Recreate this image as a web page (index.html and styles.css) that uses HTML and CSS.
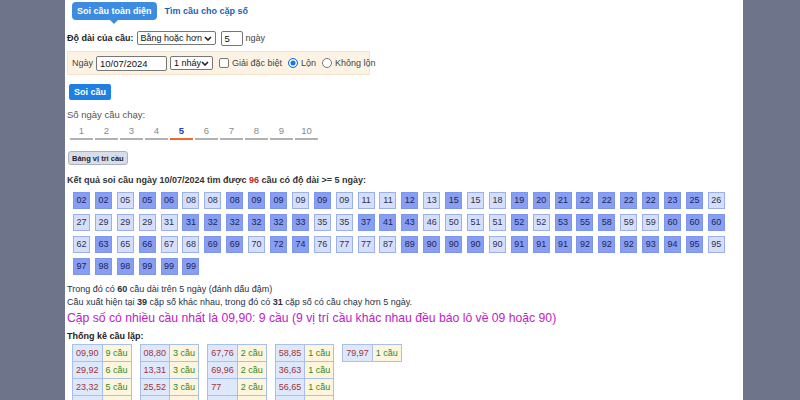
FILE: index.html
```html
<!DOCTYPE html>
<html lang="vi">
<head>
<meta charset="utf-8">
<title>Soi cầu</title>
<link rel="stylesheet" href="styles.css">
</head>
<body>
<div class="page">
  <div class="tabs">
    <span class="tab active">Soi cầu toàn diện</span>
    <span class="tab">Tìm cầu cho cặp số</span>
  </div>

  <div class="len-row">
    <span class="lbl-bold">Độ dài của cầu:</span>
    <span class="select sel-len">Bằng hoặc hơn<svg class="chev" viewBox="0 0 8 5" width="8" height="5"><path d="M1 1l3 3 3-3" fill="none" stroke="#222" stroke-width="1.6"/></svg></span>
    <span class="input inp-len">5</span>
    <span class="muted">ngày</span>
  </div>

  <div class="panel">
    <span class="muted">Ngày</span>
    <span class="input inp-date">10/07/2024</span>
    <span class="select sel-nhay">1 nháy<svg class="chev" viewBox="0 0 8 5" width="8" height="5"><path d="M1 1l3 3 3-3" fill="none" stroke="#222" stroke-width="1.6"/></svg></span>
    <span class="check"></span>
    <span class="muted opt">Giải đặc biệt</span>
    <span class="radio on"></span>
    <span class="muted opt">Lộn</span>
    <span class="radio"></span>
    <span class="muted opt">Không lộn</span>
  </div>

  <button class="btn-primary">Soi cầu</button>

  <div class="sub-label">Số ngày cầu chạy:</div>
  <div class="days">
    <span class="day">1</span><span class="day">2</span><span class="day">3</span><span class="day">4</span><span class="day active">5</span><span class="day">6</span><span class="day">7</span><span class="day">8</span><span class="day">9</span><span class="day">10</span>
  </div>

  <button class="btn-small">Bảng vị trí cầu</button>

  <div class="result-title">Kết quả soi cầu ngày 10/07/2024 tìm được <span class="red">96</span> cầu có độ dài &gt;= 5 ngày:</div>

  <div class="grid">
    <span class="c d">02</span><span class="c d">02</span><span class="c">05</span><span class="c d">05</span><span class="c d">06</span><span class="c">08</span><span class="c">08</span><span class="c d">08</span><span class="c d">09</span><span class="c d">09</span><span class="c">09</span><span class="c d">09</span><span class="c">09</span><span class="c">11</span><span class="c">11</span><span class="c d">12</span><span class="c">13</span><span class="c d">15</span><span class="c">15</span><span class="c">18</span><span class="c d">19</span><span class="c d">20</span><span class="c d">21</span><span class="c d">22</span><span class="c d">22</span><span class="c d">22</span><span class="c d">22</span><span class="c d">23</span><span class="c d">25</span><span class="c">26</span>
    <span class="c">27</span><span class="c">29</span><span class="c">29</span><span class="c">29</span><span class="c">31</span><span class="c d">31</span><span class="c d">32</span><span class="c d">32</span><span class="c d">32</span><span class="c d">32</span><span class="c d">33</span><span class="c">35</span><span class="c">35</span><span class="c d">37</span><span class="c d">41</span><span class="c d">43</span><span class="c">46</span><span class="c">50</span><span class="c">51</span><span class="c">51</span><span class="c d">52</span><span class="c">52</span><span class="c d">53</span><span class="c d">55</span><span class="c d">58</span><span class="c">59</span><span class="c">59</span><span class="c d">60</span><span class="c d">60</span><span class="c d">60</span>
    <span class="c">62</span><span class="c d">63</span><span class="c">65</span><span class="c d">66</span><span class="c">67</span><span class="c">68</span><span class="c d">69</span><span class="c d">69</span><span class="c">70</span><span class="c d">72</span><span class="c d">74</span><span class="c">76</span><span class="c">77</span><span class="c">77</span><span class="c">87</span><span class="c d">89</span><span class="c d">90</span><span class="c d">90</span><span class="c d">90</span><span class="c">90</span><span class="c d">91</span><span class="c d">91</span><span class="c d">91</span><span class="c d">92</span><span class="c d">92</span><span class="c d">92</span><span class="c d">93</span><span class="c d">94</span><span class="c d">95</span><span class="c">95</span>
    <span class="c d">97</span><span class="c d">98</span><span class="c d">98</span><span class="c d">99</span><span class="c d">99</span><span class="c d">99</span>
  </div>

  <div class="info first">Trong đó có <b>60</b> cầu dài trên 5 ngày (đánh dấu đậm)</div>
  <div class="info">Cầu xuất hiện tại <b>39</b> cặp số khác nhau, trong đó có <b>31</b> cặp số có cầu chạy hơn 5 ngày.</div>
  <div class="highlight">Cặp số có nhiều cầu nhất là 09,90: 9 cầu (9 vị trí cầu khác nhau đều báo lô về 09 hoặc 90)</div>

  <div class="stats-title">Thống kê cầu lặp:</div>
  <div class="stats">
    <table class="st">
      <tr><td class="p">09,90</td><td class="n">9 cầu</td></tr>
      <tr><td class="p">29,92</td><td class="n">6 cầu</td></tr>
      <tr><td class="p">23,32</td><td class="n">5 cầu</td></tr>
      <tr><td class="p">22,22</td><td class="n">4 cầu</td></tr>
    </table>
    <table class="st">
      <tr><td class="p">08,80</td><td class="n">3 cầu</td></tr>
      <tr><td class="p">13,31</td><td class="n">3 cầu</td></tr>
      <tr><td class="p">25,52</td><td class="n">3 cầu</td></tr>
      <tr><td class="p">59,95</td><td class="n">3 cầu</td></tr>
    </table>
    <table class="st">
      <tr><td class="p">67,76</td><td class="n">2 cầu</td></tr>
      <tr><td class="p">69,96</td><td class="n">2 cầu</td></tr>
      <tr><td class="p">77</td><td class="n">2 cầu</td></tr>
      <tr><td class="p">02,20</td><td class="n">1 cầu</td></tr>
    </table>
    <table class="st">
      <tr><td class="p">58,85</td><td class="n">1 cầu</td></tr>
      <tr><td class="p">36,63</td><td class="n">1 cầu</td></tr>
      <tr><td class="p">56,65</td><td class="n">1 cầu</td></tr>
      <tr><td class="p">12,21</td><td class="n">1 cầu</td></tr>
    </table>
    <table class="st">
      <tr><td class="p">79,97</td><td class="n">1 cầu</td></tr>
    </table>
  </div>
</div>
</body>
</html>
```

FILE: styles.css
```css
html, body {
  margin: 0;
  padding: 0;
}
body {
  background: #6e748a;
  font-family: "Liberation Sans", Arial, sans-serif;
  font-size: 9px;
  color: #333;
}
.page {
  margin-left: 65px;
  width: 678px;
  min-height: 400px;
  background: #fff;
  padding: 2px 0 20px 2px;
  box-sizing: border-box;
}

/* tabs */
.tabs {
  display: flex;
  align-items: center;
  margin-left: 5px;
  height: 18px;
}
.tab {
  font-weight: bold;
  color: #1f5fb5;
  font-size: 9px;
  line-height: 18px;
  margin-left: 8px;
  white-space: nowrap;
}
.tab.active {
  position: relative;
  margin-left: 0;
  background: #3d8ce2;
  color: #fff;
  padding: 0 5px;
  border-radius: 4px;
}
.tab.active::after {
  content: "";
  position: absolute;
  left: 50%;
  bottom: -4px;
  margin-left: -4px;
  border-left: 4px solid transparent;
  border-right: 4px solid transparent;
  border-top: 4px solid #3d8ce2;
}

/* form */
.len-row {
  display: flex;
  align-items: center;
  margin-top: 11px;
  height: 14px;
}
.len-row > *,
.panel > * {
  flex: none;
  white-space: nowrap;
}
.lbl-bold {
  font-weight: bold;
  color: #222;
}
.muted {
  color: #444;
}
.select {
  display: inline-flex;
  align-items: center;
  justify-content: space-between;
  box-sizing: border-box;
  height: 14px;
  border: 1px solid #777;
  border-radius: 2px;
  background: #fff;
  padding: 0 3px 0 3px;
  color: #111;
  font-size: 9px;
}
.chev {
  flex: none;
}
.sel-len {
  width: 79px;
  margin-left: 3px;
}
.input {
  display: inline-flex;
  align-items: center;
  box-sizing: border-box;
  height: 15px;
  border: 1px solid #777;
  border-radius: 2px;
  background: #fff;
  padding: 0 3px;
  color: #111;
  font-size: 9.5px;
}
.inp-len {
  width: 22px;
  margin-left: 5px;
  margin-right: 3px;
}

.panel {
  display: flex;
  align-items: center;
  box-sizing: border-box;
  width: 303px;
  height: 24px;
  margin-top: 6px;
  padding-left: 4px;
  background: #fdf3e5;
  border: 1px solid #f4e2cb;
}
.inp-date {
  width: 71px;
  margin-left: 3px;
}
.sel-nhay {
  width: 43px;
  margin-left: 3px;
}
.check {
  width: 10px;
  height: 10px;
  box-sizing: border-box;
  border: 1px solid #777;
  border-radius: 2px;
  margin-left: 6px;
  background: #fff;
}
.opt {
  margin-left: 3px;
}
.radio {
  width: 10px;
  height: 10px;
  box-sizing: border-box;
  border: 1px solid #777;
  border-radius: 50%;
  margin-left: 6px;
  background: #fff;
}
.radio.on {
  border: 1px solid #1a73e8;
  box-shadow: inset 0 0 0 1.5px #fff;
  background: #1a73e8;
}

.btn-primary {
  display: block;
  margin: 9px 0 0 2px;
  height: 16px;
  padding: 0 5px;
  border: 0;
  border-radius: 2px;
  background: #1f80e4;
  color: #fff;
  font-family: inherit;
  font-size: 9px;
  font-weight: bold;
}

.sub-label {
  margin-top: 10px;
  color: #555;
  font-size: 9.5px;
  line-height: 10px;
}
.days {
  display: flex;
  gap: 2px;
  margin: 3px 0 0 3px;
}
.day {
  width: 23px;
  height: 15px;
  line-height: 16px;
  text-align: center;
  color: #8a8a8a;
  font-size: 9.5px;
  border-bottom: 2px solid #b2b2b2;
}
.day.active {
  color: #1c3cb8;
  font-weight: bold;
  border-bottom-color: #ee6a2c;
}

.btn-small {
  display: block;
  margin: 11px 0 0 1px;
  height: 14px;
  padding: 0 3px;
  border: 1px solid #aab2c0;
  border-radius: 3px;
  background: #d8dee8;
  color: #223;
  font-family: inherit;
  font-size: 7.5px;
  font-weight: bold;
}

.result-title {
  margin-top: 9px;
  font-weight: bold;
  color: #333;
  line-height: 12px;
}
.red {
  color: #c0282c;
}

.grid {
  display: flex;
  flex-wrap: wrap;
  column-gap: 4.9px;
  row-gap: 5px;
  width: 655px;
  margin: 6px 0 0 6px;
}
.c {
  box-sizing: border-box;
  width: 17px;
  height: 17px;
  line-height: 15px;
  text-align: center;
  font-size: 9px;
  color: #2c3350;
  background: #d5dffb;
  border: 1px solid #9cb0ec;
}
.c.d {
  background: #889ef2;
  border-color: #7e95ec;
  color: #1e2650;
}

.info {
  line-height: 13px;
  color: #2a2f45;
}
.info.first {
  margin-top: 8px;
}
.highlight {
  color: #c021c4;
  font-size: 12.2px;
  line-height: 17px;
  margin-top: 1px;
}
.stats-title {
  margin-top: 3px;
  font-weight: bold;
  color: #222;
  line-height: 12px;
}
.stats {
  display: flex;
  align-items: flex-start;
  gap: 8px;
  margin: 2px 0 0 5px;
}
.st {
  border-collapse: collapse;
}
.st td {
  border: 1px solid #a8c0ea;
  height: 16px;
  padding: 0 3px;
  font-size: 9px;
  white-space: nowrap;
}
.st .p {
  width: 22px;
  background: #dde8fb;
  color: #a2323a;
}
.st .n {
  width: 22px;
  background: #fdf5de;
  color: #2e8a24;
}
```
